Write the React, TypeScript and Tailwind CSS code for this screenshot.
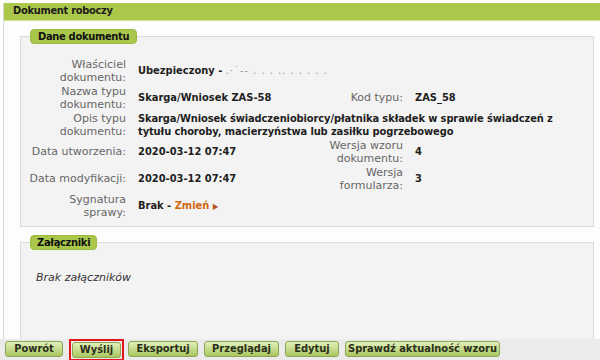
const FONT = "font-['DejaVu_Sans_Condensed','DejaVu_Sans',sans-serif]";
const REG = "font-['DejaVu_Sans',sans-serif]";

function Label({ children }: { children: React.ReactNode }) {
  return <div className={`${REG} text-right text-[#666] leading-[13px]`}>{children}</div>;
}

function Value({ children, className = '' }: { children: React.ReactNode; className?: string }) {
  return <div className={`font-bold text-[#1e1e1e] leading-[13px] ${className}`}>{children}</div>;
}

function Btn({ label, w }: { label: string; w: string }) {
  return (
    <button
      type="button"
      className={`${w} h-4 rounded-[3px] border border-[#8ea653] bg-gradient-to-b from-[#e2f0b8] to-[#a9c65e] text-[11px] font-bold leading-[14px] text-[#2a2f1c]`}
    >
      {label}
    </button>
  );
}

export default function App() {
  return (
    <div className={`${FONT} flex h-[360px] w-[600px] flex-col overflow-hidden bg-white pt-[3px] pl-[3px] text-[11px]`}>
      <div className="flex min-h-0 flex-1 flex-col border-l border-[#d6d6d6] bg-[#fdfdfd]">
        <div className="flex h-[19px] items-center border-b border-[#cfe08e] bg-[#acc84a] pl-[9px] font-bold tracking-[-0.3px] text-[#1b1b1b]">
          Dokument roboczy
        </div>

        <div className="flex flex-col gap-[8px] pt-[8px] pl-[16px] pr-[6px]">
          <fieldset className="border border-[#dadada] bg-[#f3f3f3] px-0 pt-[4px] pb-[7px]">
            <legend className="ml-[9px] rounded-[4px] border border-[#9cba3e] bg-[#a9c84b] px-[7px] text-[11px] font-bold leading-[13px] tracking-[-0.3px] text-[#111]">
              Dane dokumentu
            </legend>
            <div className="grid grid-cols-[105px_167px_86px_1fr] gap-x-[12px] gap-y-px pt-[10px]">
              <div className="col-span-4 grid min-h-[26px] grid-cols-subgrid items-center">
                <Label>Właściciel<br />dokumentu:</Label>
                <Value className="col-span-3">
                  Ubezpieczony - <span className="font-normal tracking-[1px] text-[#9a9a9a]">.·˙-- . . . .. . . . . .</span>
                </Value>
              </div>
              <div className="col-span-4 grid min-h-[26px] grid-cols-subgrid items-center">
                <Label>Nazwa typu<br />dokumentu:</Label>
                <Value>Skarga/Wniosek ZAS-58</Value>
                <Label>Kod typu:</Label>
                <Value>ZAS_58</Value>
              </div>
              <div className="col-span-4 grid min-h-[26px] grid-cols-subgrid items-center">
                <Label>Opis typu<br />dokumentu:</Label>
                <Value className="col-span-3 tracking-[-0.1px]">
                  Skarga/Wniosek świadczeniobiorcy/płatnika składek w sprawie świadczeń z<br />
                  tytułu choroby, macierzyństwa lub zasiłku pogrzebowego
                </Value>
              </div>
              <div className="col-span-4 grid min-h-[26px] grid-cols-subgrid items-center">
                <Label>Data utworzenia:</Label>
                <Value>2020-03-12 07:47</Value>
                <Label>Wersja wzoru<br />dokumentu:</Label>
                <Value>4</Value>
              </div>
              <div className="col-span-4 grid min-h-[26px] grid-cols-subgrid items-center">
                <Label>Data modyfikacji:</Label>
                <Value>2020-03-12 07:47</Value>
                <Label>Wersja<br />formularza:</Label>
                <Value>3</Value>
              </div>
              <div className="col-span-4 grid min-h-[26px] grid-cols-subgrid items-center">
                <Label>Sygnatura<br />sprawy:</Label>
                <Value className="col-span-3">
                  Brak - <span className="text-[#d0680f]">Zmień</span>{' '}
                  <span className="text-[8px] text-[#b5561a]">▶</span>
                </Value>
              </div>
            </div>
          </fieldset>

          <fieldset className="min-h-[140px] border border-[#dadada] bg-[#f3f3f3] px-0 pt-[20px]">
            <legend className="ml-[9px] rounded-[4px] border border-[#9cba3e] bg-[#a9c84b] px-[6px] text-[11px] font-bold leading-[13px] tracking-[-0.3px] text-[#111]">
              Załączniki
            </legend>
            <div className={`${REG} pl-[15px] italic text-[#333]`}>Brak załączników</div>
          </fieldset>
        </div>
      </div>

      <div className="-ml-[3px] flex h-[21px] shrink-0 items-start gap-[6px] bg-[#ebebeb] pt-[2px] pl-[5px]">
        <Btn label="Powrót" w="w-[58px]" />
        <div className="-mt-[2px] -mr-[2px] flex border-2 border-[#e0161b] p-px">
          <Btn label="Wyślij" w="w-[49px]" />
        </div>
        <Btn label="Eksportuj" w="w-[70px]" />
        <Btn label="Przeglądaj" w="w-[75px]" />
        <Btn label="Edytuj" w="w-[54px]" />
        <Btn label="Sprawdź aktualność wzoru" w="w-[155px]" />
      </div>
    </div>
  );
}
